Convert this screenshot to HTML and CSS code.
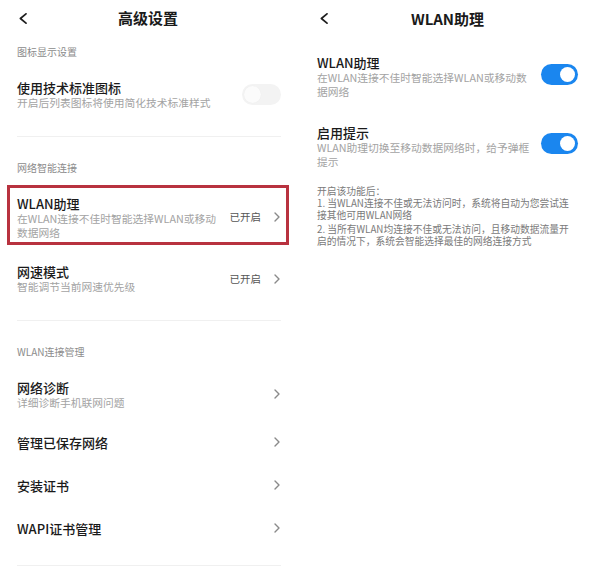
FILE: index.html
```html
<!DOCTYPE html>
<html lang="zh-CN">
<head>
<meta charset="utf-8">
<title>高级设置 / WLAN助理</title>
<link rel="stylesheet" href="styles.css">
</head>
<body>
<div class="screens">
  <section class="panel panel-left">
    <header class="topbar">
      <svg class="back" viewBox="0 0 8 11" width="8" height="11"><polyline points="7,0.8 1.4,5.5 7,10.2" /></svg>
      <h1 class="title">高级设置</h1>
    </header>

    <div class="sec-label sec-first">图标显示设置</div>
    <div class="row row-toggle">
      <div class="text">
        <div class="t">使用技术标准图标</div>
        <div class="s">开启后列表图标将使用简化技术标准样式</div>
      </div>
      <span class="switch off"><span class="knob"></span></span>
    </div>
    <div class="divider d1"></div>

    <div class="sec-label">网络智能连接</div>
    <div class="row row-hl">
      <div class="text">
        <div class="t">WLAN助理</div>
        <div class="s">在WLAN连接不佳时智能选择WLAN或移动<br>数据网络</div>
      </div>
      <span class="status">已开启</span>
      <svg class="chev" viewBox="0 0 6 10" width="6" height="10"><polyline points="1,1 5,5 1,9" /></svg>
    </div>
    <div class="row row-speed">
      <div class="text">
        <div class="t">网速模式</div>
        <div class="s">智能调节当前网速优先级</div>
      </div>
      <span class="status">已开启</span>
      <svg class="chev" viewBox="0 0 6 10" width="6" height="10"><polyline points="1,1 5,5 1,9" /></svg>
    </div>
    <div class="divider d2"></div>

    <div class="sec-label">WLAN连接管理</div>
    <div class="row row-two">
      <div class="text">
        <div class="t">网络诊断</div>
        <div class="s">详细诊断手机联网问题</div>
      </div>
      <svg class="chev" viewBox="0 0 6 10" width="6" height="10"><polyline points="1,1 5,5 1,9" /></svg>
    </div>
    <div class="row row-one">
      <div class="text"><div class="t">管理已保存网络</div></div>
      <svg class="chev" viewBox="0 0 6 10" width="6" height="10"><polyline points="1,1 5,5 1,9" /></svg>
    </div>
    <div class="row row-one">
      <div class="text"><div class="t">安装证书</div></div>
      <svg class="chev" viewBox="0 0 6 10" width="6" height="10"><polyline points="1,1 5,5 1,9" /></svg>
    </div>
    <div class="row row-one">
      <div class="text"><div class="t">WAPI证书管理</div></div>
      <svg class="chev" viewBox="0 0 6 10" width="6" height="10"><polyline points="1,1 5,5 1,9" /></svg>
    </div>
    <div class="divider d3"></div>
  </section>

  <section class="panel panel-right">
    <header class="topbar">
      <svg class="back back-r" viewBox="0 0 8 11" width="8" height="11"><polyline points="7,0.8 1.4,5.5 7,10.2" /></svg>
      <h1 class="title title-r">WLAN助理</h1>
    </header>

    <div class="rrow rrow-1">
      <div class="text">
        <div class="t">WLAN助理</div>
        <div class="s">在WLAN连接不佳时智能选择WLAN或移动数<br>据网络</div>
      </div>
      <span class="switch on sw-1"><span class="knob"></span></span>
    </div>
    <div class="rrow rrow-2">
      <div class="text">
        <div class="t">启用提示</div>
        <div class="s">WLAN助理切换至移动数据网络时，给予弹框<br>提示</div>
      </div>
      <span class="switch on sw-2"><span class="knob"></span></span>
    </div>

    <div class="info">
      <p class="info-line">开启该功能后：</p>
      <p class="info-line">1. 当WLAN连接不佳或无法访问时，系统将自动为您尝试连<br>接其他可用WLAN网络</p>
      <p class="info-line info-gap">2. 当所有WLAN均连接不佳或无法访问，且移动数据流量开<br>启的情况下，系统会智能选择最佳的网络连接方式</p>
    </div>
  </section>
</div>
</body>
</html>
```

FILE: styles.css
```css
* { box-sizing: border-box; }

html, body {
  margin: 0;
  padding: 0;
  background: #ffffff;
}

body {
  font-family: "Noto Sans CJK SC", "Noto Sans", sans-serif;
  color: #1c1c1c;
}

.screens {
  display: flex;
  width: 612px;
  height: 577px;
  overflow: hidden;
}

.panel-left { width: 296px; flex: none; }
.panel-right { width: 316px; flex: none; padding: 0 34px 0 21px; }

/* top bar */
.topbar {
  height: 36px;
  display: grid;
  align-items: center;
}
.back {
  grid-area: 1 / 1;
  justify-self: start;
  margin-left: 19px;
}
.back polyline {
  fill: none;
  stroke: #1e1e1e;
  stroke-width: 1.7;
  stroke-linecap: round;
  stroke-linejoin: round;
}
.back-r { margin-left: 3px; }
.title {
  grid-area: 1 / 1;
  justify-self: center;
  margin: 0;
  font-size: 15px;
  line-height: 20px;
  font-weight: 700;
  color: #1a1a1a;
}
.title-r { margin-top: 2px; }

/* section labels */
.sec-label {
  font-size: 10px;
  line-height: 14px;
  color: #8c8c8c;
  padding: 24px 17px 10px;
}
.sec-first { padding-top: 9px; padding-bottom: 9px; }

/* rows */
.row {
  display: flex;
  align-items: center;
  padding: 0 16px 0 17px;
}
.text { flex: 1; min-width: 0; }
.t {
  font-size: 13px;
  line-height: 17px;
  font-weight: 500;
  color: #1a1a1a;
  white-space: nowrap;
}
.s {
  font-size: 10.75px;
  line-height: 14px;
  color: #a3a3a3;
  white-space: nowrap;
}
.status {
  font-size: 10.5px;
  line-height: 14px;
  color: #555;
  margin-right: 13px;
}
.chev { flex: none; }
.chev polyline {
  fill: none;
  stroke: #8a8a8a;
  stroke-width: 1.4;
  stroke-linecap: round;
  stroke-linejoin: round;
}

.row-toggle { height: 53px; padding-right: 15px; }
.row-hl {
  margin: 0 7px;
  border: 3px solid #b8323f;
  padding: 6.5px 6px 2.5px 7px;
}
.row-speed { height: 67px; }
.row-two { padding-top: 9.5px; padding-bottom: 11px; }
.row-one { height: 43px; }

.divider {
  height: 1px;
  background: #f0f0f0;
  margin: 0 15px 0 17px;
}
.d1 { margin-top: 15px; }
.d2 { margin-top: 8px; }
.d3 { margin-top: 15.5px; }

/* switches */
.switch {
  position: relative;
  flex: none;
  display: block;
  border-radius: 11px;
}
.switch .knob {
  position: absolute;
  border-radius: 50%;
  background: #ffffff;
}
.switch.off {
  width: 39px;
  height: 21px;
  background: #f3f3f3;
}
.switch.off .knob {
  left: 2px;
  top: 2px;
  width: 17px;
  height: 17px;
  background: #fbfbfb;
  box-shadow: 0 0 1px rgba(0,0,0,0.06);
}
.switch.on {
  width: 37px;
  height: 21px;
  background: #1a86ef;
}
.switch.on .knob {
  right: 3px;
  top: 3px;
  width: 15px;
  height: 15px;
}

/* right panel rows */
.rrow {
  display: flex;
  align-items: flex-start;
}
.rrow-1 { padding-top: 17.5px; }
.rrow-2 { margin-top: 25px; }
.sw-1 { margin-top: 10.5px; }
.sw-2 { margin-top: 9.5px; }

.info { margin-top: 16.25px; }
.info-line {
  margin: 0;
  font-size: 9.75px;
  line-height: 12px;
  color: #7a7a7a;
  white-space: nowrap;
}
.info-gap { margin-top: 2px; }
```
